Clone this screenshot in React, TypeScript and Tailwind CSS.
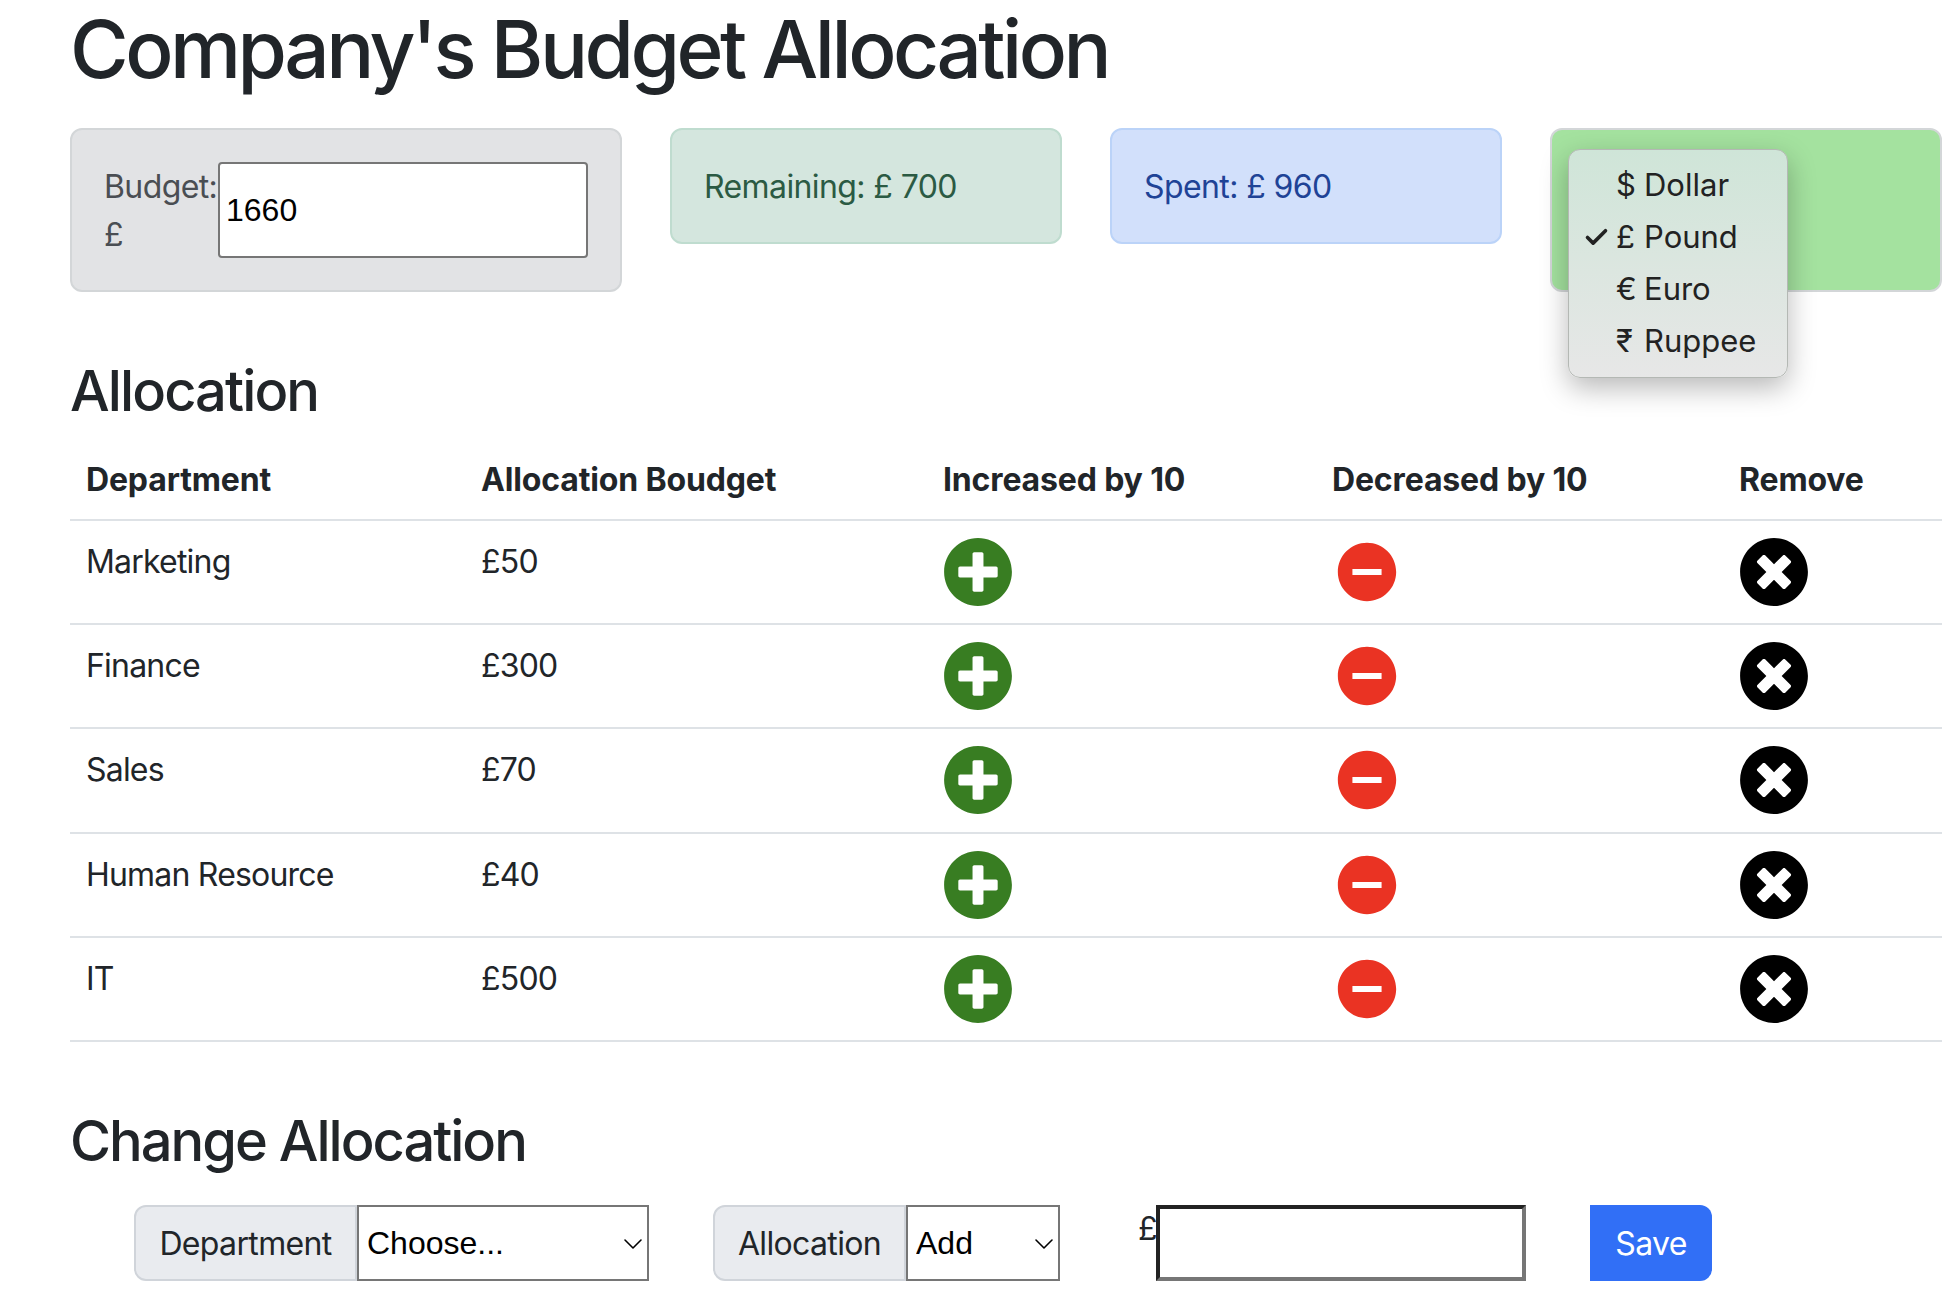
import { Check, ChevronDown } from "lucide-react"
import { FaPlusCircle, FaTimesCircle } from "react-icons/fa"
import { MdRemoveCircle } from "react-icons/md"

const rows = [
  { name: "Marketing", budget: 50 },
  { name: "Finance", budget: 300 },
  { name: "Sales", budget: 70 },
  { name: "Human Resource", budget: 40 },
  { name: "IT", budget: 500 },
]

const currencies = [
  { symbol: "$", label: "Dollar" },
  { symbol: "£", label: "Pound", selected: true },
  { symbol: "€", label: "Euro" },
  { symbol: "₹", label: "Ruppee" },
]

function CurrencyMenu() {
  return (
    <div className="absolute top-[19px] left-[16px] flex h-[229px] w-[220px] flex-col rounded-[12px] border border-[#b4b8b4] bg-gradient-to-b from-[#cfe5d8] to-[#e7e7e7] pt-[9px] shadow-[0_10px_28px_rgba(0,0,0,0.28)]">
      {currencies.map((c) => (
        <div key={c.label} className="flex h-[52px] shrink-0 items-center text-[31px] text-[#222222]">
          <span className="flex w-[47px] justify-end pr-[6px]">
            {c.selected && <Check size={27} strokeWidth={3.2} />}
          </span>
          <span className="w-[28px]">{c.symbol}</span>
          <span>{c.label}</span>
        </div>
      ))}
    </div>
  )
}

function SelectBox({ width, value }: { width: string; value: string }) {
  return (
    <div className={`relative h-[76px] ${width}`}>
      <select
        defaultValue={value}
        className="h-full w-full appearance-none border-[2px] border-[#767676] bg-white pl-[8px] font-['Liberation_Sans',sans-serif] text-[32px] tracking-normal text-black"
      >
        <option>{value}</option>
      </select>
      <ChevronDown size={32} strokeWidth={1.2} className="pointer-events-none absolute top-[23px] right-0 text-black" />
    </div>
  )
}

export default function App() {
  return (
    <div className="h-[1304px] overflow-hidden bg-white pr-[12px] pl-[70px] font-['Inter',sans-serif] text-[32px] leading-[48px] tracking-[-0.8px] text-[#212529]">
      <h1 className="mb-[32px] h-[96px] pt-[1px] text-[80px] leading-[96px] font-medium tracking-[-3.5px]">
        Company's Budget Allocation
      </h1>

      <div className="flex items-start gap-[48px] tracking-[-0.6px]">
        <div className="flex h-[164px] w-[552px] rounded-[12px] border-2 border-[#d3d6d8] bg-[#e2e3e5] py-[32px] pr-[32px] pl-[32px] text-[#4a4e53]">
          <span className="w-[114px] shrink-0 pt-[1px]">Budget: £</span>
          <input
            defaultValue="1660"
            className="h-[96px] w-full rounded-[4px] border-2 border-[#767676] bg-white px-[6px] font-['Liberation_Sans',sans-serif] text-[32px] tracking-normal text-black"
          />
        </div>
        <div className="h-[116px] w-[392px] rounded-[12px] border-2 border-[#bfdccf] bg-[#d4e6de] px-[32px] pt-[33px] text-[#2b5a43]">
          Remaining: £ 700
        </div>
        <div className="h-[116px] w-[392px] rounded-[12px] border-2 border-[#bbd3f8] bg-[#d2e0fb] px-[32px] pt-[33px] text-[#1f4396]">
          Spent: £ 960
        </div>
        <div className="relative h-[164px] w-[392px] rounded-[12px] border-2 border-[#d3d6d8] bg-[#a4e29f] tracking-normal">
          <CurrencyMenu />
        </div>
      </div>

      <h3 className="mt-[66px] mb-[15px] text-[56px] leading-[67px] font-medium tracking-[-1.9px]">Allocation</h3>

      <table className="w-full table-fixed border-collapse text-left">
        <colgroup>
          <col className="w-[395px]" />
          <col className="w-[462px]" />
          <col className="w-[389px]" />
          <col className="w-[407px]" />
          <col />
        </colgroup>
        <thead className="tracking-[-0.15px]">
          <tr className="border-b-2 border-[#dee2e6]">
            <th className="px-[16px] pt-[16px] pb-[15px] font-bold">Department</th>
            <th className="px-[16px] pt-[16px] pb-[15px] font-bold">Allocation Boudget</th>
            <th className="px-[16px] pt-[16px] pb-[15px] font-bold">Increased by 10</th>
            <th className="px-[16px] pt-[16px] pb-[15px] font-bold">Decreased by 10</th>
            <th className="px-[16px] pt-[16px] pb-[15px] font-bold">Remove</th>
          </tr>
        </thead>
        <tbody>
          {rows.map((row) => (
            <tr key={row.name} className="h-[104.2px] border-b-2 border-[#dee2e6] align-top">
              <td className="px-[16px] pt-[17px]">{row.name}</td>
              <td className="px-[16px] pt-[17px]">£{row.budget}</td>
              <td className="p-[16px]">
                <FaPlusCircle size={70} className="text-[#387d22]" />
              </td>
              <td className="p-[16px]">
                <MdRemoveCircle size={70} className="text-[#ea3323]" />
              </td>
              <td className="p-[16px]">
                <FaTimesCircle size={70} className="text-black" />
              </td>
            </tr>
          ))}
        </tbody>
      </table>

      <h3 className="mt-[66px] mb-[30px] text-[56px] leading-[67px] font-medium tracking-[-2px]">Change Allocation</h3>

      <div className="ml-[64px] flex items-start tracking-[-0.65px]">
        <div className="flex h-[76px] w-[223px] items-center justify-center rounded-l-[12px] border-2 border-[#d0d4da] bg-[#e9ebef] pt-[2px]">
          Department
        </div>
        <SelectBox width="w-[292px]" value="Choose..." />
        <div className="ml-[64px] flex h-[76px] w-[193px] items-center justify-center rounded-l-[12px] border-2 border-[#d0d4da] bg-[#e9ebef] pt-[2px]">
          Allocation
        </div>
        <SelectBox width="w-[154px]" value="Add" />
        <span className="ml-[78px] w-[18px] leading-[47px]">£</span>
        <input className="h-[76px] w-[370px] border-[4px] border-t-[#222222] border-r-[#767676] border-b-[#767676] border-l-[#222222] bg-white" />
        <button className="ml-[64px] flex h-[76px] w-[122px] items-center justify-center rounded-r-[12px] bg-[#316ff6] pt-[2px] text-white">
          Save
        </button>
      </div>
    </div>
  )
}
